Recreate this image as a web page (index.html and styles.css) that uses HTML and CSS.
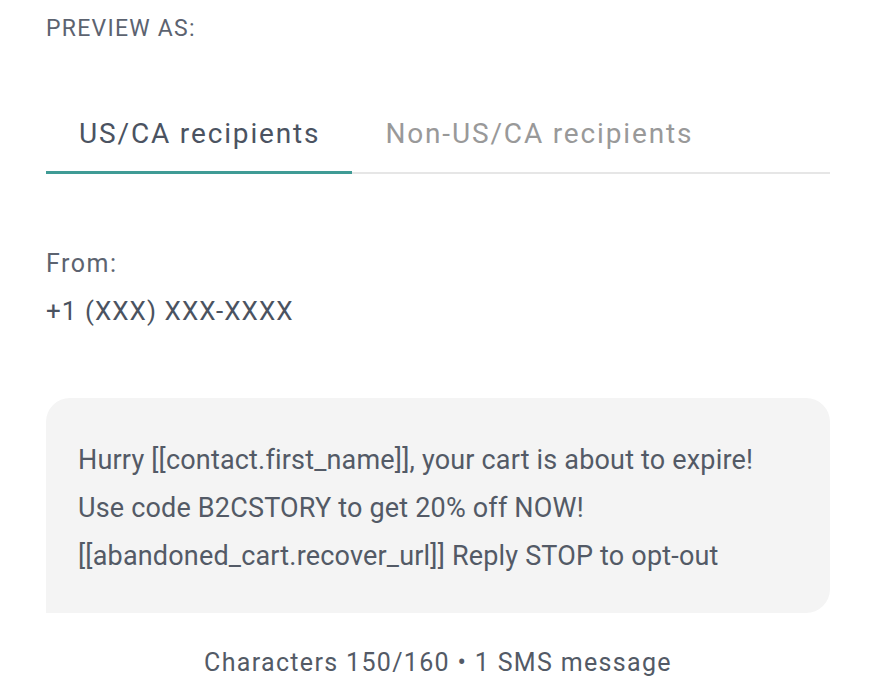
FILE: index.html
```html
<!DOCTYPE html>
<html>
<head>
<meta charset="utf-8">
<link rel="stylesheet" href="styles.css">
</head>
<body>
<div class="preview">
  <div class="label">PREVIEW AS:</div>
  <div class="tabs">
    <div class="tab active">US/CA recipients</div>
    <div class="tab">Non-US/CA recipients</div>
  </div>
  <div class="from">
    <div class="from-label">From:</div>
    <div class="from-number">+1 (XXX) XXX-XXXX</div>
  </div>
  <div class="bubble">
    <p>Hurry [[contact.first_name]], your cart is about to expire! Use code B2CSTORY to get 20% off NOW! [[abandoned_cart.recover_url]] Reply STOP to opt-out</p>
  </div>
  <div class="count">Characters 150/160 • 1 SMS message</div>
</div>
</body>
</html>
```
FILE: styles.css
```css
html, body {
  margin: 0;
  padding: 0;
  background: #ffffff;
}
body {
  font-family: Roboto, "Noto Sans", sans-serif;
  color: #535a66;
}
.preview {
  width: 784px;
  margin-left: 46px;
  padding-top: 15px;
}
.label {
  font-size: 23px;
  letter-spacing: 1.25px;
  line-height: 28px;
  color: #5c6370;
}
.tabs {
  display: flex;
  margin-top: 71px;
  border-bottom: 2px solid #e6e6e6;
}
.tab {
  font-size: 28px;
  letter-spacing: 1.85px;
  line-height: 40px;
  padding: 0 32px 17px 33px;
  color: #999999;
  margin-bottom: -2px;
  border-bottom: 3px solid transparent;
}
.tab.active {
  color: #4b5361;
  border-bottom-color: #3f9b95;
}
.from {
  margin-top: 74px;
}
.from-label {
  font-size: 25px;
  letter-spacing: 1.5px;
  line-height: 32px;
  color: #5c6370;
}
.from-number {
  font-size: 26px;
  letter-spacing: 1.05px;
  line-height: 34px;
  margin-top: 14px;
  color: #4b5361;
}
.bubble {
  margin-top: 70px;
  background: #f4f4f4;
  border-radius: 24px 24px 24px 0;
  padding: 38px 32px 33px;
}
.bubble p {
  margin: 0;
  font-size: 27px;
  letter-spacing: 0.18px;
  line-height: 48px;
  width: 700px;
  color: #535a66;
}
.count {
  text-align: center;
  font-size: 25px;
  letter-spacing: 1.33px;
  line-height: 32px;
  margin-top: 34px;
  color: #535a66;
}
```
